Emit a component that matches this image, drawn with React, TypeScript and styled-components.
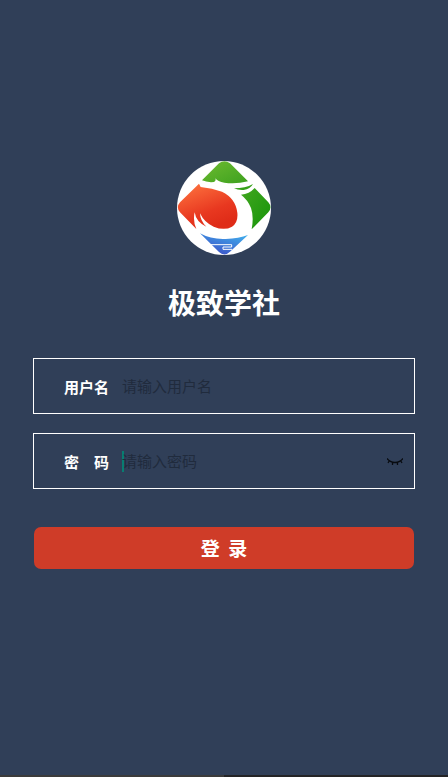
import React from "react";
import styled, { createGlobalStyle } from "styled-components";

const GlobalStyle = createGlobalStyle`
  *, *::before, *::after { box-sizing: border-box; }
  body {
    margin: 0;
    background: #303f58;
    font-family: "Noto Sans CJK SC", sans-serif;
  }
`;

const Page = styled.main`
  min-height: 100vh;
  display: flex;
  flex-direction: column;
  background: #303f58;
  color: #fff;
`;

const Content = styled.div`
  flex: 1;
  display: flex;
  flex-direction: column;
  align-items: center;
  padding: 161px 33px 40px;
`;

const Logo = styled.svg`
  display: block;
  width: 94px;
  height: 94px;
`;

const Title = styled.h1`
  margin: 27px 0 36px;
  font-size: 28px;
  line-height: 40px;
  font-weight: 700;
`;

const Form = styled.form`
  width: 100%;
  display: flex;
  flex-direction: column;
  gap: 19px;
`;

const Field = styled.div`
  display: flex;
  align-items: center;
  height: 56px;
  padding: 0 11px 0 30px;
  border: 1px solid #fff;
`;

const Label = styled.label`
  width: 58px;
  flex: none;
  padding-top: 2px;
  font-size: 15px;
  line-height: 22px;
  font-weight: 700;
  white-space: pre;
`;

const Input = styled.input`
  flex: 1;
  min-width: 0;
  height: 22px;
  padding: 0;
  border: 0;
  outline: 0;
  background: transparent;
  color: #fff;
  caret-color: #087d72;
  font: 400 15px/22px "Noto Sans CJK SC", sans-serif;
  &::placeholder { color: #202b3d; opacity: 1; }
`;

const Caret = styled.span`
  width: 2px;
  height: 21px;
  flex: none;
  margin-right: -2px;
  background: #087d72;
`;

const EyeButton = styled.button`
  display: flex;
  flex: none;
  padding: 2px 0 0;
  border: 0;
  background: none;
  cursor: pointer;
`;

const SubmitButton = styled.button`
  height: 42px;
  margin: 19px 1px 0;
  padding: 0;
  border: 0;
  border-radius: 7px;
  background: #cf3c28;
  color: #fff;
  font: 700 19px/28px "Noto Sans CJK SC", sans-serif;
  white-space: pre;
  cursor: pointer;
`;

const BottomBar = styled.div`
  display: flex;
  height: 2px;
`;

const BarHalf = styled.span<{ $color: string }>`
  flex: 1;
  background: ${({ $color }) => $color};
`;

function SchoolLogo() {
  return (
    <Logo viewBox="9 14 282 282" role="img" aria-label="极致学社">
      <defs>
        <linearGradient id="green" x1="0" y1="0" x2="1" y2="1">
          <stop offset="0" stopColor="#6ebb30" />
          <stop offset="1" stopColor="#3da11f" />
        </linearGradient>
        <linearGradient id="leaf" x1="0" y1="0" x2="1" y2="1">
          <stop offset="0" stopColor="#42a620" />
          <stop offset="1" stopColor="#159409" />
        </linearGradient>
        <linearGradient id="red" x1="0" y1="0" x2="0.5" y2="1">
          <stop offset="0" stopColor="#ff7841" />
          <stop offset="0.7" stopColor="#e83820" />
          <stop offset="1" stopColor="#df2c18" />
        </linearGradient>
        <linearGradient id="blue" x1="1" y1="0" x2="0.3" y2="1">
          <stop offset="0" stopColor="#42b7ef" />
          <stop offset="1" stopColor="#3c51c8" />
        </linearGradient>
      </defs>
      <circle cx="150" cy="155" r="141" fill="#fff" />
      <path d="M84 72 L135 21 Q151 8 168 21 L222 75 Q185 84 151 79 Q131 76 124 66 Q127 74 120 77 Q99 79 84 72Z" fill="url(#green)" />
      <path d="M180 96 Q214 96 237 83 Q229 98 209 101 Q192 102 180 96Z" fill="#35a019" />
      <path d="M201 115 Q226 113 242 95 L283 138 Q296 153 283 168 L233 219 Q240 181 231 155 Q221 130 201 115Z" fill="url(#leaf)" />
      <path d="M75 82 L18 138 Q5 153 18 168 L67 218 Q56 194 62 168 Q66 197 97 211 Q79 194 78 171 Q91 199 119 211 Q151 224 174 211 Q193 199 190 169 Q185 126 144 106 Q115 95 80 92Z" fill="url(#red)" />
      <path d="M78 231 Q112 250 155 248 Q195 246 222 236 L168 286 Q151 302 135 287Z" fill="url(#blue)" />
      <path d="M107 265 H173 V272 H147 V279 H174" fill="none" stroke="#fff" strokeWidth="3" />
    </Logo>
  );
}

function ClosedEye() {
  return (
    <svg width="16" height="8" viewBox="0 0 16 8" fill="none" stroke="#080b10" strokeWidth="1.3" aria-hidden="true">
      <path d="M0 0.5 Q3 4.5 8 4.5 Q13 4.5 16 0.5 M2.5 2.5 L1 5 M5.5 4.2 V7 M10.5 4.2 V7 M13.5 2.5 L15 5" />
    </svg>
  );
}

export default function App() {
  return (
    <>
      <GlobalStyle />
      <Page>
        <Content>
          <SchoolLogo />
          <Title>极致学社</Title>
          <Form onSubmit={(event) => event.preventDefault()}>
            <Field>
              <Label htmlFor="username">用户名</Label>
              <Input id="username" type="text" placeholder="请输入用户名" />
            </Field>
            <Field>
              <Label htmlFor="password">密　码</Label>
              <Caret />
              <Input id="password" type="password" placeholder="请输入密码" />
              <EyeButton type="button" aria-label="显示密码">
                <ClosedEye />
              </EyeButton>
            </Field>
            <SubmitButton type="submit">{"登  录"}</SubmitButton>
          </Form>
        </Content>
        <BottomBar>
          <BarHalf $color="#3b3b3b" />
          <BarHalf $color="#242426" />
        </BottomBar>
      </Page>
    </>
  );
}
